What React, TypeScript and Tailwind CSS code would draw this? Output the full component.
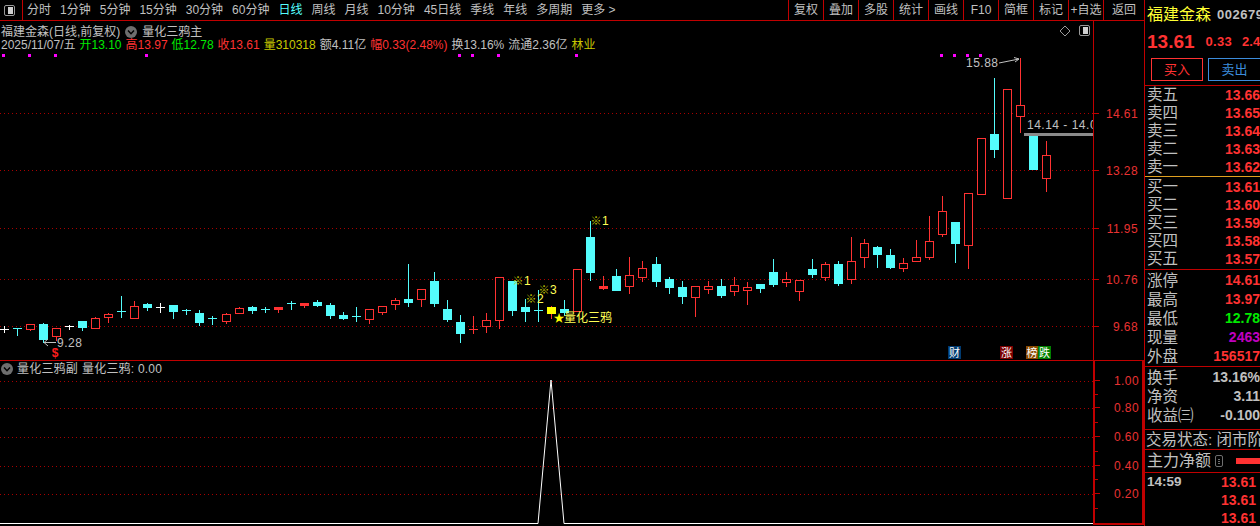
const RED = '#ff3232'
const CYAN = '#54fcfc'

// top, bottom, high, low, kind (c cyan, r red box, f red solid, w white, R red cross, y yellow)
const candles: [number, number, number, number, string][] = [
  [329, 329, 326, 332, 'w'], [328, 328, 328, 335, 'c'], [324, 329, 324, 330, 'r'], [324, 339, 323, 342, 'c'],
  [328, 336, 328, 340, 'r'], [326, 326, 325, 329, 'w'], [321, 327, 321, 330, 'c'], [318, 328, 317, 328, 'r'],
  [314, 317, 313, 322, 'r'], [311, 311, 296, 317, 'c'], [306, 318, 301, 318, 'r'], [304, 307, 303, 310, 'c'],
  [307, 307, 303, 312, 'w'], [305, 311, 305, 318, 'c'], [310, 310, 309, 314, 'c'], [313, 322, 310, 325, 'c'],
  [318, 318, 316, 324, 'c'], [314, 321, 313, 323, 'r'], [308, 313, 307, 313, 'r'], [307, 310, 306, 313, 'c'],
  [309, 309, 307, 312, 'c'], [307, 309, 307, 312, 'f'], [303, 303, 301, 309, 'c'], [303, 305, 303, 307, 'f'],
  [302, 305, 300, 306, 'c'], [305, 315, 303, 318, 'c'], [315, 318, 312, 319, 'c'], [316, 316, 307, 321, 'c'],
  [309, 319, 309, 323, 'r'], [306, 312, 306, 314, 'r'], [300, 304, 298, 309, 'r'], [299, 302, 264, 306, 'c'],
  [289, 299, 289, 306, 'r'], [281, 303, 272, 306, 'c'], [309, 319, 300, 321, 'c'], [322, 333, 315, 342, 'c'],
  [329, 329, 316, 333, 'R'], [320, 326, 313, 332, 'r'], [277, 320, 277, 328, 'r'], [281, 310, 281, 315, 'c'],
  [307, 311, 299, 321, 'c'], [310, 310, 290, 321, 'c'], [307, 313, 306, 318, 'y'], [309, 312, 300, 315, 'c'],
  [269, 311, 269, 311, 'r'], [237, 272, 221, 280, 'c'], [286, 288, 276, 289, 'f'], [276, 290, 269, 290, 'c'],
  [275, 286, 257, 293, 'r'], [268, 277, 261, 281, 'r'], [264, 281, 257, 286, 'c'], [279, 287, 277, 293, 'c'],
  [287, 296, 281, 303, 'c'], [286, 297, 286, 316, 'r'], [286, 289, 281, 293, 'r'], [286, 295, 279, 297, 'c'],
  [285, 291, 277, 295, 'r'], [287, 290, 282, 304, 'r'], [284, 288, 284, 292, 'c'], [272, 284, 259, 286, 'c'],
  [279, 282, 272, 286, 'r'], [280, 291, 280, 300, 'r'], [269, 274, 259, 277, 'c'], [264, 277, 262, 280, 'r'],
  [264, 283, 261, 285, 'c'], [261, 279, 237, 283, 'r'], [243, 257, 239, 267, 'r'], [247, 254, 246, 267, 'c'],
  [255, 267, 249, 268, 'c'], [263, 268, 258, 271, 'r'], [257, 261, 240, 261, 'r'], [241, 257, 216, 259, 'r'],
  [211, 234, 196, 236, 'r'], [222, 243, 222, 262, 'c'], [193, 245, 193, 268, 'r'], [138, 194, 138, 194, 'r'],
  [134, 149, 78, 157, 'c'], [89, 198, 89, 198, 'r'], [105, 116, 58, 132, 'r'], [136, 169, 136, 169, 'c'],
  [155, 178, 141, 191, 'r'],
]

const candleX = (i: number) => Math.round(4 + 13.03 * i)
const navItems = ['分时', '1分钟', '5分钟', '15分钟', '30分钟', '60分钟', '日线', '周线', '月线', '10分钟', '45日线', '季线', '年线', '多周期', '更多 >']
const toolItems = ['复权', '叠加', '多股', '统计', '画线', 'F10', '简框', '标记', '+自选']
const dotCandles = [0, 2, 4, 11, 35, 36, 38, 44, 72, 73, 74, 75]

function PanelIcon() {
  return (
    <div className="w-[11px] h-[11px] rounded-[2px] border border-[#9a9a9a] flex justify-end p-[1px]">
      <div className="w-[5px] bg-[#d0d0d0]" />
    </div>
  )
}

function ChevronCircle() {
  return (
    <svg width="12" height="12" viewBox="0 0 12 12" className="shrink-0">
      <circle cx="6" cy="6" r="6" fill="#6e6e6e" />
      <path d="M3 4.5 L6 7.8 L9 4.5" fill="none" stroke="#000" strokeWidth="1.4" />
    </svg>
  )
}

function Candle({ c, i }: { c: [number, number, number, number, string]; i: number }) {
  const x = candleX(i)
  const [top, bottom, high, low, kind] = c
  const color = kind === 'c' ? CYAN : kind === 'w' ? '#ffffff' : RED
  const wick = <line x1={x + 0.5} x2={x + 0.5} y1={high} y2={low + 1} stroke={color} />
  if (top === bottom) {
    return (
      <g>
        {wick}
        <line x1={x - 4} x2={x + 5} y1={top + 0.5} y2={top + 0.5} stroke={color} />
      </g>
    )
  }
  if (kind === 'r') {
    return (
      <g>
        {wick}
        <rect x={x - 3.5} y={top + 0.5} width={8} height={bottom - top} fill="#000" stroke={RED} />
      </g>
    )
  }
  return (
    <g>
      {wick}
      <rect x={x - 4} y={top} width={9} height={bottom - top + 1} fill={kind === 'y' ? '#ffff00' : color} />
    </g>
  )
}

function Grid({ rows }: { rows: number[] }) {
  return (
    <>
      {rows.map((y) => (
        <line key={y} x1={0} x2={1093} y1={y + 0.5} y2={y + 0.5} stroke="#a80000" strokeDasharray="1 3" />
      ))}
    </>
  )
}

function Axis({ labels, minor }: { labels: [number, string][]; minor?: number[] }) {
  return (
    <svg className="w-full h-full block">
      {labels.map(([y, t]) => (
        <g key={t}>
          <line x1={0} x2={5} y1={y + 0.5} y2={y + 0.5} stroke="#c00000" />
          <text x={44} y={y + 4.5} textAnchor="end" fontSize="12" letterSpacing="0.4" fill="#e83232">{t}</text>
        </g>
      ))}
      {minor?.map((y) => <line key={y} x1={0} x2={3} y1={y + 0.5} y2={y + 0.5} stroke="#c00000" />)}
    </svg>
  )
}

function MainChart() {
  return (
    <svg viewBox="0 21 1093 339" className="absolute left-0 top-0 w-[1093px] h-[339px]" shapeRendering="crispEdges">
      <Grid rows={[113, 170, 228, 279, 326]} />
      {dotCandles.map((i) => <rect key={i} x={candleX(i) - 2} y={54} width={3} height={3} fill="#ff00ff" />)}
      {candles.map((c, i) => <Candle key={i} c={c} i={i} />)}
      <rect x={1024} y={133} width={69} height={3} fill="#8a8a8a" />
      <g shapeRendering="auto" fontSize="12" fill="#c0c0c0" letterSpacing="0.5">
        <text x={1027} y={129}>14.14 - 14.00</text>
        <text x={966} y={67}>15.88</text>
        <path d="M999 63 L1019 59 M1014 57.5 L1019 59 L1015 62" fill="none" stroke="#c0c0c0" />
        <text x={57} y={347}>9.28</text>
        <path d="M56 342.5 L44 342.5 M48 339 L44 342.5 L48 346" fill="none" stroke="#c0c0c0" />
        <path d="M1065 26 L1070 31 L1065 36 L1060 31 Z" fill="none" stroke="#9a9a9a" />
      </g>
      <g shapeRendering="auto" fontSize="12">
        <text x={55} y={357} textAnchor="middle" fontWeight="700" fill="#ff1e1e">$</text>
        <text x={596} y={225} textAnchor="middle" fontSize="11" fontWeight="700" fill="#c0c000">※</text>
        <text x={602} y={225} fill="#ffff55">1</text>
        <text x={518} y={285} textAnchor="middle" fontSize="11" fontWeight="700" fill="#c0c000">※</text>
        <text x={524} y={285} fill="#ffff55">1</text>
        <text x={531} y={303} textAnchor="middle" fontSize="11" fontWeight="700" fill="#c0c000">※</text>
        <text x={537} y={303} fill="#ffff55">2</text>
        <text x={544} y={294} textAnchor="middle" fontSize="11" fontWeight="700" fill="#c0c000">※</text>
        <text x={550} y={294} fill="#ffff55">3</text>
        <text x={559} y={322} textAnchor="middle" fontSize="11" fill="#ffff00">★</text>
        <text x={564} y={322} fill="#ffff55">量化三鸦</text>
      </g>
      <g shapeRendering="auto" fontSize="11" fill="#ffffff" textAnchor="middle">
        <rect x={948} y={346} width={13} height={13} fill="#003a70" />
        <text x={954.5} y={357}>财</text>
        <rect x={1000} y={346} width={13} height={13} fill="#7a0000" />
        <text x={1006.5} y={357}>涨</text>
        <rect x={1026} y={346} width={12} height={13} fill="#8a4a00" />
        <text x={1032} y={357}>榜</text>
        <rect x={1038} y={346} width={13} height={13} fill="#008000" />
        <text x={1044.5} y={357}>跌</text>
      </g>
    </svg>
  )
}

function QuoteRow({ label, value, color, h = 'h-[18px]' }: { label: string; value: string; color: string; h?: string }) {
  return (
    <div className={`flex items-center justify-between ${h}`}>
      <span className="text-[15.5px] text-[#c0c0c0] whitespace-nowrap">{label}</span>
      <span className="text-[14px] font-bold" style={{ color }}>{value}</span>
    </div>
  )
}

export default function App() {
  const sell: [string, string][] = [['卖五', '13.66'], ['卖四', '13.65'], ['卖三', '13.64'], ['卖二', '13.63'], ['卖一', '13.62']]
  const buy: [string, string][] = [['买一', '13.61'], ['买二', '13.60'], ['买三', '13.59'], ['买四', '13.58'], ['买五', '13.57']]

  return (
    <div className="w-[1260px] h-[526px] bg-black flex overflow-hidden font-['Liberation_Sans','Noto_Sans_CJK_SC',sans-serif] text-[#c0c0c0]">
      {/* toolbar + charts */}
      <div className="w-[1144px] flex flex-col shrink-0">
        <div className="h-[21px] border-b border-[#c00000] flex items-stretch text-[12px] shrink-0">
          <div className="w-[22px] flex items-center pl-[4px]"><PanelIcon /></div>
          <div className="w-[766px] border-l border-[#c00000] flex items-center gap-[9px] pl-[4px] whitespace-nowrap">
            {navItems.map((n) => (
              <span key={n} className={n === '日线' ? 'text-[#55ffff]' : ''}>{n}</span>
            ))}
          </div>
          {toolItems.map((t) => (
            <div key={t} className="w-[35px] border-l border-[#c00000] flex items-center justify-center whitespace-nowrap">{t}</div>
          ))}
          <div className="flex-1 border-l border-[#c00000] flex items-center justify-center">返回</div>
        </div>

        {/* main chart */}
        <div className="h-[339px] flex shrink-0">
          <div className="w-[1093px] relative overflow-hidden">
            <MainChart />
            <div className="absolute left-[1px] top-[4px] text-[12px] leading-[14px]">
              <div className="flex items-center gap-[5px] h-[14px]">
                <span>福建金森(日线,前复权)</span>
                <ChevronCircle />
                <span>量化三鸦主</span>
              </div>
              <div className="flex items-center gap-[4px] h-[14px] mt-[-1px] whitespace-nowrap">
                <span>2025/11/07/五</span>
                <span className="text-[#00ea00]">开13.10</span>
                <span className="text-[#ff3232]">高13.97</span>
                <span className="text-[#00ea00]">低12.78</span>
                <span className="text-[#ff3232]">收13.61</span>
                <span className="text-[#c8c800]">量310318</span>
                <span>额4.11亿</span>
                <span className="text-[#ff3232]">幅0.33(2.48%)</span>
                <span>换13.16%</span>
                <span>流通2.36亿</span>
                <span className="text-[#c8c800]">林业</span>
              </div>
            </div>
            <div className="absolute left-[1079px] top-[4px]"><PanelIcon /></div>
          </div>
          <div className="flex-1 border-l border-[#c00000]">
            <Axis labels={[[92, '14.61'], [149, '13.28'], [207, '11.95'], [258, '10.76'], [305, '9.68']]} />
          </div>
        </div>

        {/* sub chart */}
        <div className="flex-1 flex border-t border-[#c00000]">
          <div className="w-[1093px] relative overflow-hidden">
            <svg viewBox="0 361 1093 165" className="absolute left-0 top-0 w-[1093px] h-[165px]">
              <g shapeRendering="crispEdges"><Grid rows={[381, 408, 437, 466, 494]} /></g>
              <path d="M0 523.5 L538 523.5 L551 380 L564 523.5 L1093 523.5" fill="none" stroke="#ffffff" />
            </svg>
            <div className="absolute left-[1px] top-[1px] h-[14px] flex items-center gap-[4px] text-[12px] tracking-[0.2px] whitespace-nowrap">
              <ChevronCircle />
              <span>量化三鸦副</span>
              <span>量化三鸦: 0.00</span>
            </div>
          </div>
          <div className="flex-1 border-2 border-t-0 border-[#c00000] mb-[1px]">
            <Axis
              labels={[[19, '1.00'], [46, '0.80'], [75, '0.60'], [104, '0.40'], [132, '0.20']]}
              minor={[33, 61, 90, 118, 147]}
            />
          </div>
        </div>
      </div>

      {/* quote panel */}
      <div className="flex-1 border-l border-[#c00000] flex flex-col overflow-hidden">
        <div className="h-[86px] pl-[2px] border-b border-[#c00000] shrink-0 whitespace-nowrap">
          <div className="flex items-center h-[30px] gap-[6px]">
            <span className="text-[16px] text-[#ffff33]">福建金森</span>
            <span className="text-[13px] font-bold tracking-[0.5px]">002679</span>
          </div>
          <div className="flex items-center h-[24px] text-[#ff3232]">
            <span className="text-[19px] font-bold">13.61</span>
            <span className="text-[13px] font-bold ml-[11px] tracking-[0.3px]">0.33</span>
            <span className="text-[13px] font-bold ml-[10px]">2.48%</span>
          </div>
          <div className="flex gap-[5px] mt-[4px] pl-[4px] text-[13px]">
            <div className="w-[52px] h-[23px] shrink-0 border border-[#ff3232] text-[#ff3232] flex items-center justify-center">买入</div>
            <div className="w-[53px] h-[23px] shrink-0 border border-[#3c8cdc] text-[#3c8cdc] flex items-center justify-center">卖出</div>
          </div>
        </div>

        <div className="border-b border-[#e0a020] pl-[2px] h-[91px] shrink-0">
          {sell.map(([l, v]) => <QuoteRow key={l} label={l} value={v} color="#ff3232" />)}
        </div>
        <div className="border-b border-[#c00000] pl-[2px] pt-[1px] h-[93px] shrink-0">
          {buy.map(([l, v]) => <QuoteRow key={l} label={l} value={v} color="#ff3232" />)}
        </div>
        <div className="border-b border-[#c00000] pl-[2px] pt-[1px] h-[97px] shrink-0">
          <QuoteRow label="涨停" value="14.61" color="#ff3232" h="h-[19px]" />
          <QuoteRow label="最高" value="13.97" color="#ff3232" h="h-[19px]" />
          <QuoteRow label="最低" value="12.78" color="#00ea00" h="h-[19px]" />
          <QuoteRow label="现量" value="2463" color="#c000c0" h="h-[19px]" />
          <QuoteRow label="外盘" value="156517" color="#ff3232" h="h-[19px]" />
        </div>
        <div className="border-b border-[#c00000] pl-[2px] pt-[1px] h-[63px] shrink-0">
          <QuoteRow label="换手" value="13.16%" color="#c0c0c0" h="h-[19px]" />
          <QuoteRow label="净资" value="3.11" color="#c0c0c0" h="h-[19px]" />
          <QuoteRow label="收益㈢" value="-0.100" color="#c0c0c0" h="h-[19px]" />
        </div>
        <div className="border-b border-[#c00000] pl-[1px] h-[20px] shrink-0 flex items-center text-[15.5px] whitespace-nowrap">
          交易状态: 闭市阶段
        </div>
        <div className="border-b border-[#c00000] pl-[2px] h-[23px] shrink-0 flex items-center text-[16px] whitespace-nowrap">
          <span>主力净额</span>
          <div className="ml-[4px] w-[12px] h-[12px] rounded-[2px] border border-[#6e6e6e] flex flex-col justify-center gap-[1px] px-[2px]">
            <div className="h-[1px] bg-[#6e6e6e]" />
            <div className="h-[1px] bg-[#6e6e6e]" />
            <div className="h-[1px] bg-[#6e6e6e]" />
          </div>
          <div className="ml-[13px] w-[24px] h-[6px] bg-[#ff3232] shrink-0" />
        </div>
        <div className="pl-[2px] pr-[4px] text-[14px] font-bold">
          <div className="flex justify-between h-[18px] items-center"><span className="text-[13.5px]">14:59</span><span className="text-[#ff3232]">13.61</span></div>
          <div className="flex justify-end h-[18px] items-center text-[#ff3232]">13.61</div>
          <div className="flex justify-end h-[18px] items-center text-[#ff3232]">13.61</div>
        </div>
      </div>
    </div>
  )
}
